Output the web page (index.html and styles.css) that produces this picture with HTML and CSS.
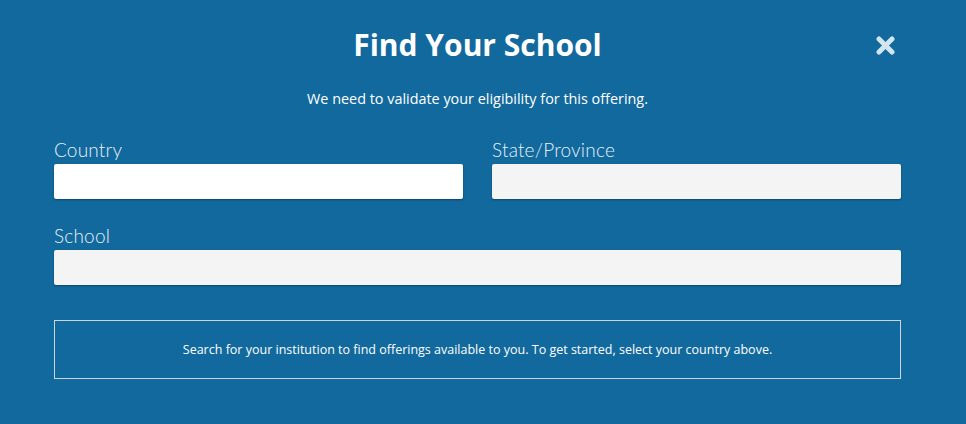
FILE: index.html
```html
<!DOCTYPE html>
<html lang="en">
<head>
    <meta charset="UTF-8">
    <meta name="viewport" content="width=device-width, initial-scale=1.0">
    <title>Find Your School</title>
    <link rel="stylesheet" href="styles.css">
</head>
<body>
    <div class="modal">
        <div class="modal-header">
            <h1>Find Your School</h1>
            <button class="close" type="button" aria-label="Close">
                <svg width="19" height="19" viewBox="0 0 19 19">
                    <path d="M3 3 L16 16 M16 3 L3 16" stroke="#d3e5ef" stroke-width="5" stroke-linecap="round"/>
                </svg>
            </button>
        </div>
        <p class="intro">We need to validate your eligibility for this offering.</p>
        <form class="school-form">
            <div class="row two">
                <div class="form-group">
                    <label for="country">Country</label>
                    <input type="text" id="country" class="active">
                </div>
                <div class="form-group">
                    <label for="state">State/Province</label>
                    <input type="text" id="state" disabled>
                </div>
            </div>
            <div class="row">
                <div class="form-group">
                    <label for="school">School</label>
                    <input type="text" id="school" disabled>
                </div>
            </div>
        </form>
        <div class="info">
            Search for your institution to find offerings available to you. To get started, select your country above.
        </div>
    </div>
</body>
</html>
```

FILE: styles.css
```css
html, body {
    margin: 0;
    height: 100%;
}
body {
    background-color: #12699d;
    font-family: "Open Sans", Arial, sans-serif;
    color: white;
}
.modal {
    padding: 23px 65px 0 54px;
}
.modal-header {
    position: relative;
    text-align: center;
}
h1 {
    margin: 0;
    font-size: 30px;
    font-weight: 700;
    line-height: 44px;
}
.close {
    position: absolute;
    right: 6px;
    top: 13px;
    background: none;
    border: none;
    padding: 0;
    cursor: pointer;
}
.intro {
    text-align: center;
    font-size: 14.4px;
    line-height: 20px;
    margin: 22px 0 30px;
}
.row {
    margin-bottom: 26px;
}
.row.two {
    display: grid;
    grid-template-columns: 1fr 1fr;
    column-gap: 29px;
}
label {
    display: block;
    font-family: "Lato", sans-serif;
    font-weight: 300;
    font-size: 19px;
    letter-spacing: 0.2px;
    color: #e6f1f7;
    margin-bottom: 3px;
    line-height: 22px;
}
input[type="text"] {
    display: block;
    width: 100%;
    height: 35px;
    box-sizing: border-box;
    border: none;
    border-radius: 2px;
    background-color: #f4f4f4;
    box-shadow: 0 1px 2px rgba(0,0,0,0.35);
}
input.active {
    background-color: white;
}
.info {
    margin-top: 35px;
    border: 1px solid #c9d7e0;
    height: 57px;
    display: flex;
    align-items: center;
    justify-content: center;
    font-size: 12.5px;
}
```
